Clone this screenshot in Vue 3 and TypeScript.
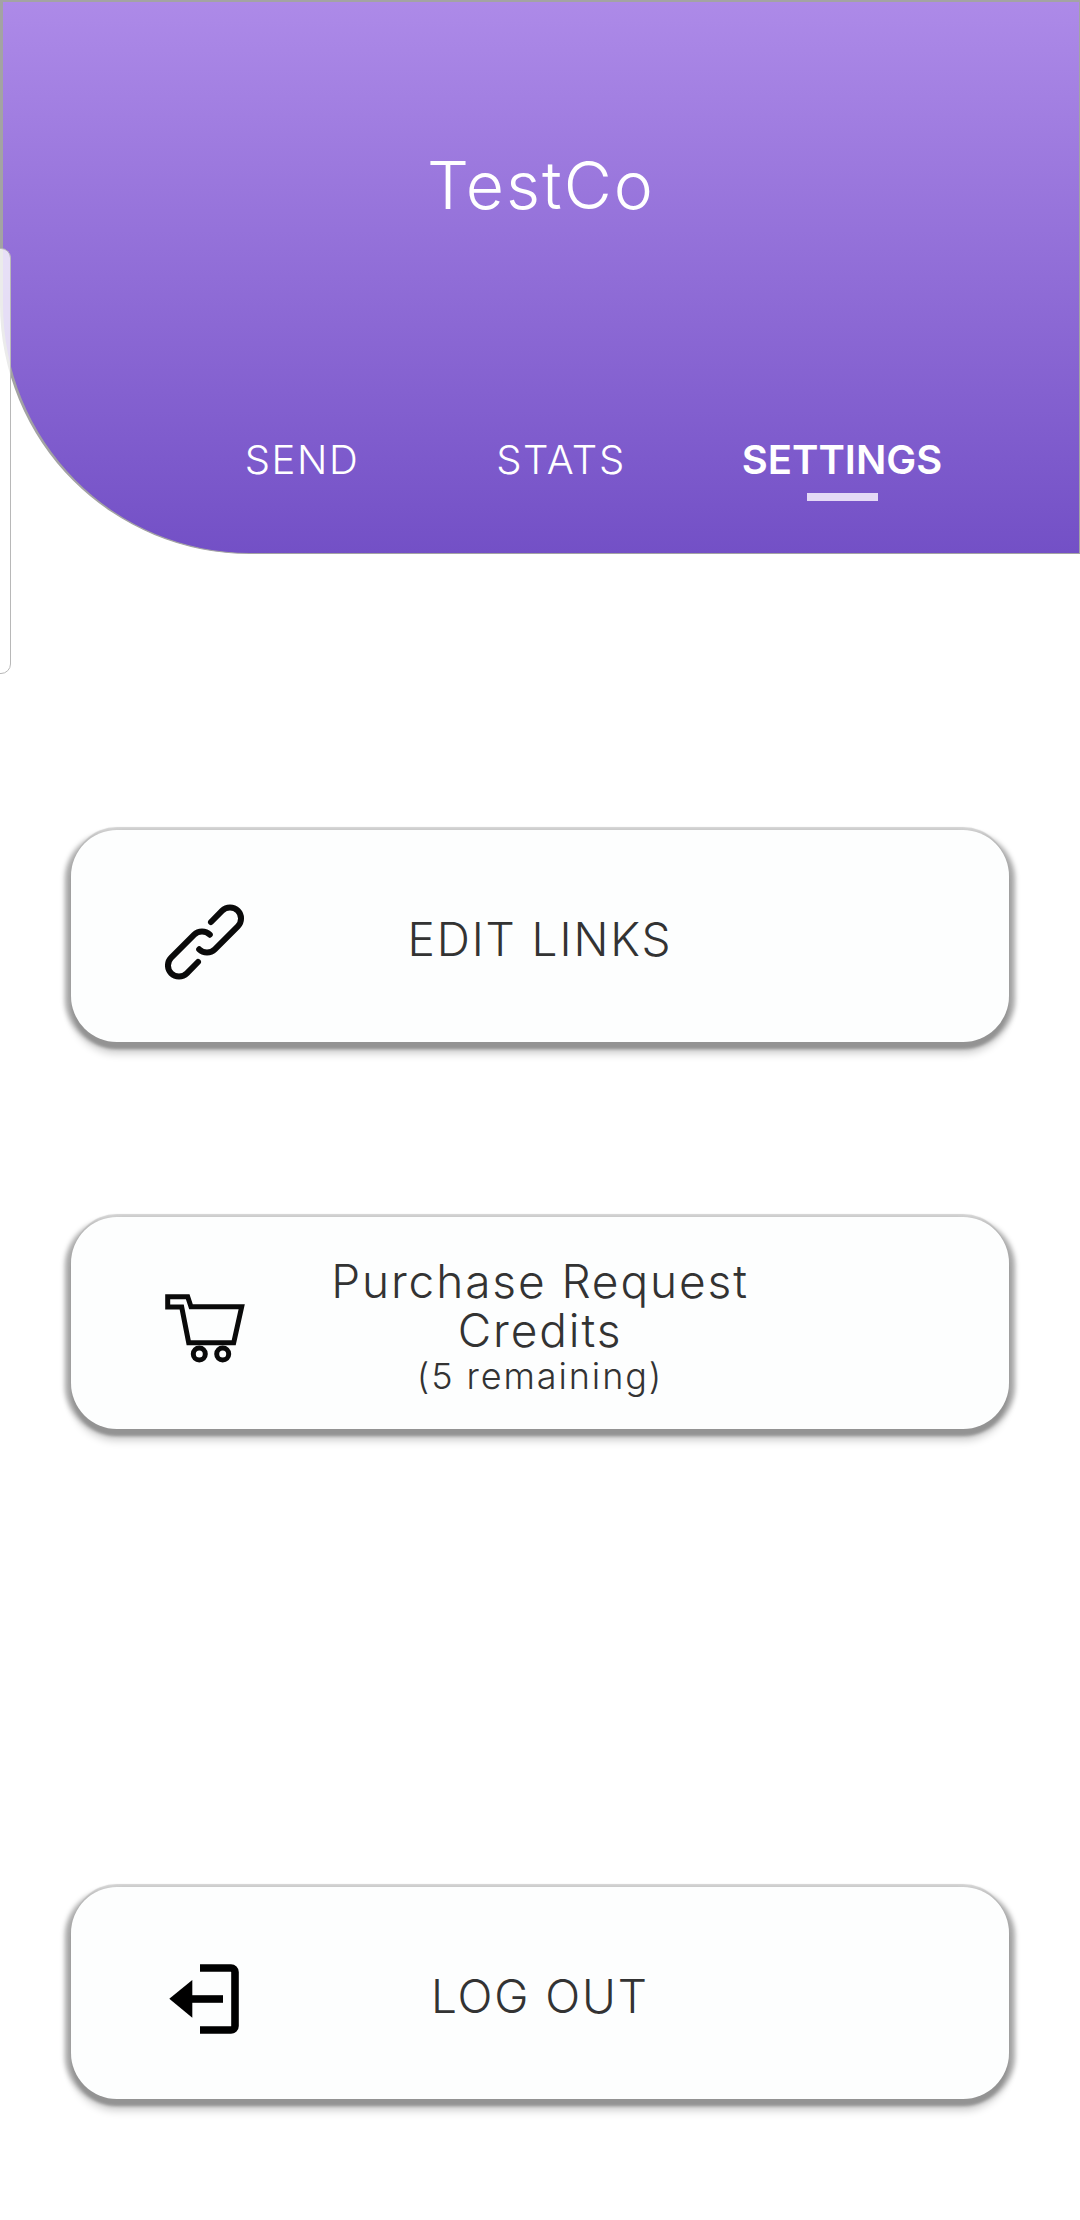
<template>
  <div class="page">
    <div class="drawer-handle"></div>
    <header class="header">
      <h1 class="company">{{ company }}</h1>
      <nav class="tabs">
        <a
          v-for="tab in tabs"
          :key="tab"
          class="tab"
          :class="{ active: tab === activeTab }"
        >{{ tab }}</a>
      </nav>
    </header>

    <main class="actions">
      <button class="card">
        <svg class="icon" viewBox="0 0 80 80" fill="none" stroke="#0a0a0a" stroke-width="6" stroke-linecap="round">
          <path d="M46 20 L57.2 8.7 A11 11 0 0 1 72.8 24.3 L49.8 47.3 A11 11 0 0 1 34.2 47.3" />
          <path d="M33 60 L21.8 71.3 A11 11 0 0 1 6.2 55.7 L29.2 32.7 A11 11 0 0 1 44.8 32.7" />
        </svg>
        <span class="label">EDIT LINKS</span>
      </button>

      <button class="card purchase">
        <svg class="icon" viewBox="0 0 80 70" fill="none" stroke="#0a0a0a" stroke-width="5">
          <path d="M2.7 13 V2.7 H22.7 L26 12.7 H76.7 L68.7 48.7 H23.7 L16.7 13 Z" />
          <circle cx="34.3" cy="60" r="6" />
          <circle cx="57.7" cy="60" r="6" />
        </svg>
        <span class="label">
          Purchase Request<br />Credits
          <small class="remaining">({{ remaining }} remaining)</small>
        </span>
      </button>

      <button class="card logout">
        <svg class="icon" viewBox="0 0 72 72" fill="none" stroke="#000" stroke-width="7.6">
          <path d="M32 5 H63 A4 4 0 0 1 67 9 V63 A4 4 0 0 1 63 67 H32" />
          <path d="M24 36 H55" />
          <path d="M1.3 35.7 L24.3 17 V54.7 Z" fill="#000" stroke="none" />
        </svg>
        <span class="label">LOG OUT</span>
      </button>
    </main>
  </div>
</template>

<script setup lang="ts">
const company = 'TestCo'
const tabs = ['SEND', 'STATS', 'SETTINGS']
const activeTab = 'SETTINGS'
const remaining = 5
</script>

<style>
html,
body {
  margin: 0;
  background: #fff;
}
</style>

<style scoped>
.page {
  position: relative;
  width: 1080px;
  height: 2220px;
  overflow: hidden;
  background: #fff;
  font-family: Inter, 'Noto Sans', sans-serif;
  font-weight: 300;
}

.drawer-handle {
  position: absolute;
  top: 248px;
  left: -2px;
  z-index: 2;
  width: 11px;
  height: 424px;
  border: 1px solid #b8b8b8;
  border-radius: 0 10px 10px 0;
  background: rgba(255, 255, 255, 0.78);
}

.header {
  box-sizing: border-box;
  height: 554px;
  padding-top: 148px;
  border: 2px solid #a3a3a3;
  border-width: 2px 1px 1px 3px;
  border-bottom-left-radius: 250px;
  background: linear-gradient(180deg, #ad8ae8 0%, #7350c6 100%);
  color: #fff;
}

.company {
  margin: 0;
  font-size: 66px;
  font-weight: 300;
  letter-spacing: 2px;
  line-height: 70px;
  text-align: center;
}

.tabs {
  display: grid;
  grid-template-columns: 260px 258px 304px;
  margin-top: 217px;
  padding-left: 169px;
}

.tab {
  position: relative;
  font-size: 40px;
  letter-spacing: 1.6px;
  line-height: 46px;
  text-align: center;
}

.tab.active {
  font-weight: 600;
  letter-spacing: 0;
}

.tab.active::after {
  content: '';
  position: absolute;
  top: 56px;
  left: 50%;
  width: 71px;
  height: 8px;
  margin-left: -35px;
  background: #e4d9f6;
}

.actions {
  display: flex;
  flex-direction: column;
  padding: 276px 71px 0;
}

.card {
  display: grid;
  grid-template-columns: 1fr 560px 1fr;
  align-items: center;
  box-sizing: border-box;
  width: 938px;
  height: 212px;
  padding: 0;
  border: 0;
  border-radius: 46px;
  background: #fdfefe;
  box-shadow:
    0 7px 3px #939393,
    -6px 3px 5px #a8a8a8,
    6px 3px 5px #a8a8a8,
    0 11px 9px rgba(0, 0, 0, 0.22),
    0 -5px 1px -2px #d4d4d4;
  color: #333;
  font-family: inherit;
  font-weight: 300;
}

.purchase {
  margin-top: 175px;
}

.logout {
  margin-top: 458px;
}

.icon {
  grid-column: 1;
  width: 80px;
  height: 80px;
  margin: 12px 0 0 94px;
}

.purchase .icon {
  height: 70px;
}

.logout .icon {
  width: 72px;
  height: 72px;
  margin-left: 97px;
}

.label {
  grid-column: 2;
  padding-top: 7px;
  font-size: 46px;
  letter-spacing: 1.9px;
  line-height: 49px;
  text-align: center;
}

.remaining {
  display: block;
  font-size: 36px;
  letter-spacing: 1.9px;
  line-height: 42px;
}
</style>
